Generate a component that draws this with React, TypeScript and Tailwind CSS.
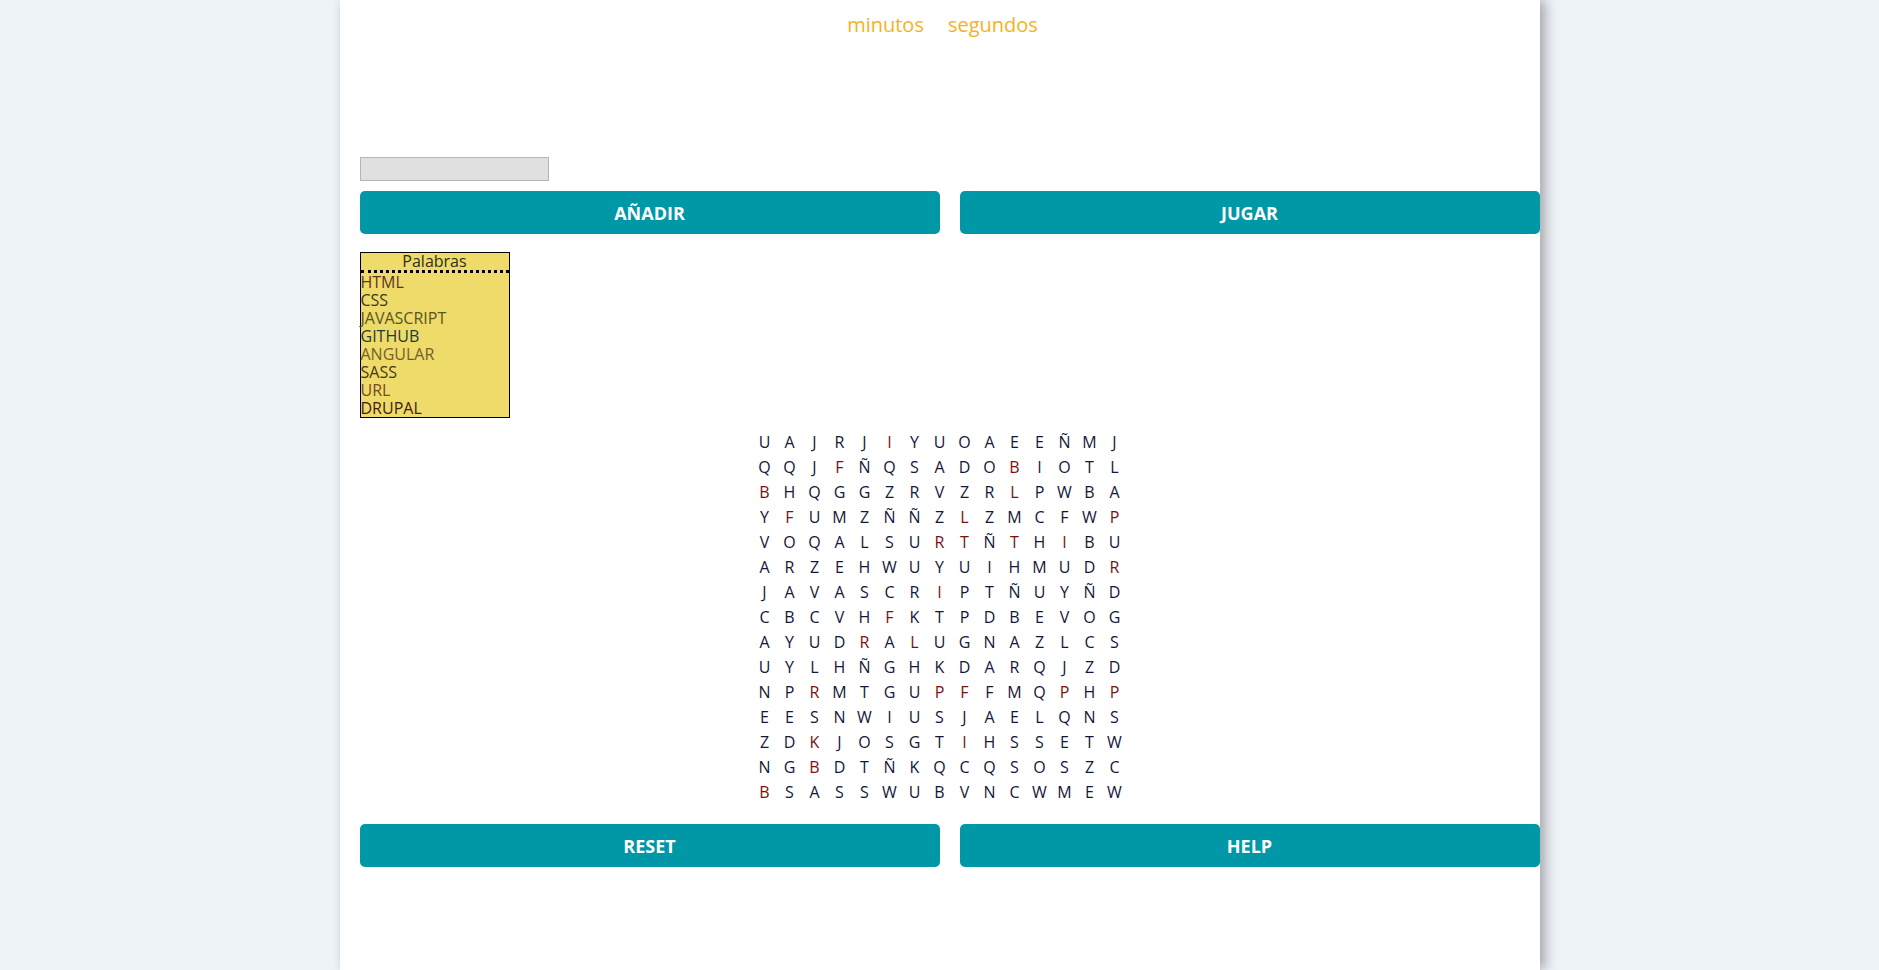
import React from 'react';

// letters marked with * are drawn in dark red
const rows: string[] = [
  'U A J R J *I Y U O A E E Ñ M J',
  'Q Q J *F Ñ Q S A D O *B I O T L',
  '*B H Q G G Z R V Z R *L P W B A',
  'Y *F U M Z Ñ Ñ Z *L Z M C F W *P',
  'V O Q A L S U *R *T Ñ *T H *I B U',
  'A R Z E H W U Y U I H M U D *R',
  'J A V A S C R *I P T Ñ U Y Ñ D',
  'C B C V H *F K T P D B E V O G',
  'A Y U D *R A *L U G N A Z L C S',
  'U Y L H Ñ G H K D A R Q J Z D',
  'N P *R M T G U *P *F F M Q *P H *P',
  'E E S N W I U S J A E L Q N S',
  'Z D *K J O S G T *I H S S E T W',
  'N G *B D T Ñ K Q C Q S O S Z C',
  '*B S A S S W U B V N C W M E W',
];

const words: { text: string; color: string }[] = [
  { text: 'HTML', color: 'text-[#5e3526]' },
  { text: 'CSS', color: 'text-[#3a3a1e]' },
  { text: 'JAVASCRIPT', color: 'text-[#58551f]' },
  { text: 'GITHUB', color: 'text-[#1f3b38]' },
  { text: 'ANGULAR', color: 'text-[#72602c]' },
  { text: 'SASS', color: 'text-[#473519]' },
  { text: 'URL', color: 'text-[#74482a]' },
  { text: 'DRUPAL', color: 'text-[#451a1a]' },
];

const Button = ({ label }: { label: string }) => (
  <button className="h-[43px] rounded-[5px] bg-[#0097a7] text-white font-bold text-[18px] leading-none">
    {label}
  </button>
);

export default function App() {
  return (
    <div className="min-h-screen bg-[#eef3f8]" style={{ fontFamily: '"Open Sans", "Liberation Sans", sans-serif' }}>
      <div className="mx-auto w-[1200px] min-h-[970px] bg-white shadow-[5px_0_12px_rgba(0,0,0,0.32)] pb-10">
        <div className="flex justify-center gap-6 pl-[6px] pt-[11px] text-[20px] leading-7 text-[#f6b21b]">
          <span>minutos</span>
          <span>segundos</span>
        </div>

        <div className="pl-5">
          <input type="text" className="mt-[118px] block w-[189px] h-6 bg-[#e0e0e0] border border-[#b5b5b5] outline-none" />

          <div className="mt-[10px] grid grid-cols-2 gap-5">
            <Button label="AÑADIR" />
            <Button label="JUGAR" />
          </div>

          <div className="mt-[18px] w-[150px] border border-black bg-[#eedb6a] text-[16px]">
            <div className="h-5 border-b-[3px] border-dotted border-black text-center leading-[17px] text-[#2e2e1a]">
              Palabras
            </div>
            {words.map((w) => (
              <div key={w.text} className={`h-[18px] leading-[18px] ${w.color}`}>
                {w.text}
              </div>
            ))}
          </div>
        </div>

        <div className="mt-[11px] mx-auto w-fit grid grid-cols-[repeat(15,25px)]">
          {rows.map((row, r) =>
            row.split(' ').map((cell, c) => {
              const red = cell.startsWith('*');
              const ch = red ? cell.slice(1) : cell;
              return (
                <div
                  key={`${r}-${c}`}
                  className={`h-[25px] flex items-center justify-center text-[16px] ${red ? 'text-[#7a1212]' : 'text-[#14163a]'}`}
                >
                  {ch}
                </div>
              );
            })
          )}
        </div>

        <div className="pl-5 mt-[20px] grid grid-cols-2 gap-5">
          <Button label="RESET" />
          <Button label="HELP" />
        </div>
      </div>
    </div>
  );
}
